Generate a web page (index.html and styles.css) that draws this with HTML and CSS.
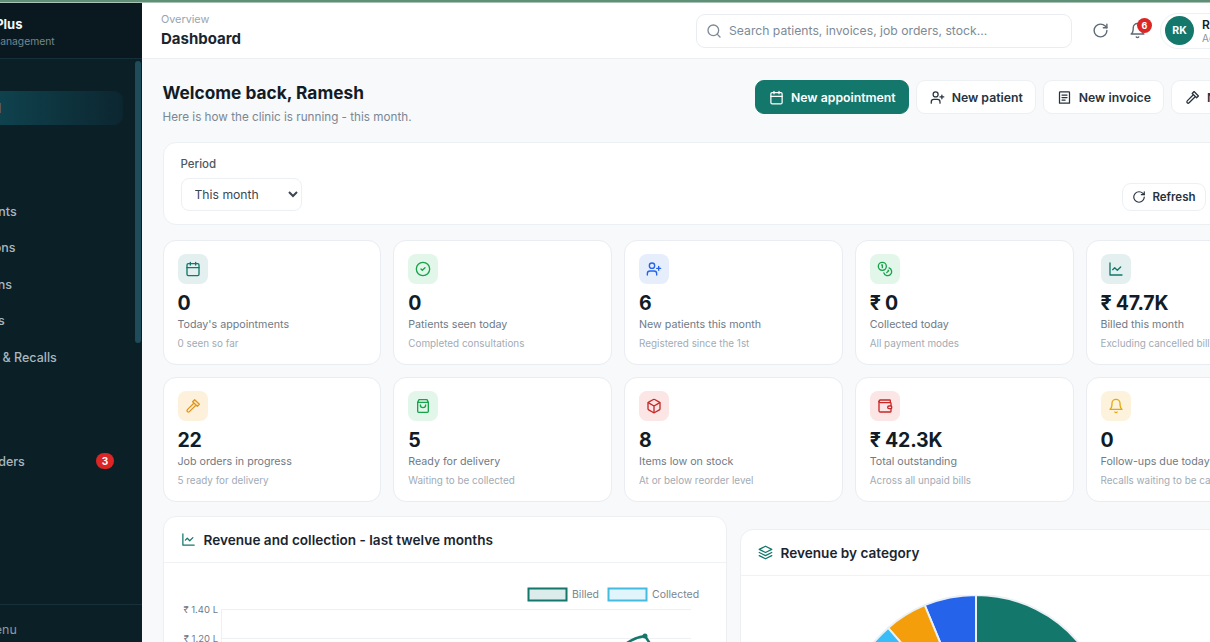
FILE: index.html
```html
<!DOCTYPE html>
<html lang="en">
<head>
  <meta charset="UTF-8" />
  <meta name="viewport" content="width=device-width, initial-scale=1.0"/>
  <title>Dashboard - OpticPlus</title>
  <link rel="stylesheet" href="styles.css">
</head>
<body>
  <svg class="icon-defs" aria-hidden="true">
    <symbol id="i-calendar" viewBox="0 0 24 24"><rect x="3" y="4" width="18" height="18" rx="2"/><path d="M16 2v4M8 2v4M3 10h18"/></symbol>
    <symbol id="i-user-plus" viewBox="0 0 24 24"><path d="M16 21v-2a4 4 0 0 0-4-4H6a4 4 0 0 0-4 4v2"/><circle cx="9" cy="7" r="4"/><path d="M19 8v6M22 11h-6"/></symbol>
    <symbol id="i-invoice" viewBox="0 0 24 24"><path d="M5 3h14a1 1 0 0 1 1 1v17H4V4a1 1 0 0 1 1-1z"/><path d="M8 8h8M8 12h8M8 16h5"/></symbol>
    <symbol id="i-hammer" viewBox="0 0 24 24"><path d="M14.5 2.5l7 7-3 3-7-7z"/><path d="M12.5 8.5L3.6 17.4a2.1 2.1 0 0 0 3 3l8.9-8.9"/></symbol>
    <symbol id="i-check" viewBox="0 0 24 24"><circle cx="12" cy="12" r="10"/><path d="M9 12l2 2 4-4"/></symbol>
    <symbol id="i-coins" viewBox="0 0 24 24"><circle cx="8" cy="8" r="6"/><path d="M18.09 10.37A6 6 0 1 1 10.34 18M7 6h1v4M16.71 13.88l.7.71-2.82 2.82"/></symbol>
    <symbol id="i-chart" viewBox="0 0 24 24"><path d="M3 3v18h18"/><path d="M19 9l-5 5-4-4-3 3"/></symbol>
    <symbol id="i-bag" viewBox="0 0 24 24"><path d="M6 2.5h12l2 4V20a1.5 1.5 0 0 1-1.5 1.5h-13A1.5 1.5 0 0 1 4 20V6.5z"/><path d="M4 6.5h16M16 10.5a4 4 0 0 1-8 0"/></symbol>
    <symbol id="i-box" viewBox="0 0 24 24"><path d="M21 8a2 2 0 0 0-1-1.73l-7-4a2 2 0 0 0-2 0l-7 4A2 2 0 0 0 3 8v8a2 2 0 0 0 1 1.73l7 4a2 2 0 0 0 2 0l7-4A2 2 0 0 0 21 16z"/><path d="M3.3 7l8.7 5 8.7-5M12 22V12"/></symbol>
    <symbol id="i-wallet" viewBox="0 0 24 24"><path d="M20 7V4a1 1 0 0 0-1-1H5a2 2 0 0 0 0 4h15a1 1 0 0 1 1 1v4h-3a2 2 0 0 0 0 4h3a1 1 0 0 0 1-1v-2a1 1 0 0 0-1-1"/><path d="M3 5v14a2 2 0 0 0 2 2h15a1 1 0 0 0 1-1v-4"/></symbol>
    <symbol id="i-bell" viewBox="0 0 24 24"><path d="M6 8a6 6 0 0 1 12 0c0 7 3 9 3 9H3s3-2 3-9"/><path d="M10.3 21a1.94 1.94 0 0 0 3.4 0"/></symbol>
    <symbol id="i-layers" viewBox="0 0 24 24"><path d="M12 2L2 7l10 5 10-5z"/><path d="M2 17l10 5 10-5M2 12l10 5 10-5"/></symbol>
    <symbol id="i-search" viewBox="0 0 24 24"><circle cx="11" cy="11" r="8"/><path d="M21 21l-4.3-4.3"/></symbol>
    <symbol id="i-rotate" viewBox="0 0 24 24"><path d="M21 12a9 9 0 1 1-9-9c2.52 0 4.93 1 6.74 2.74L21 8"/><path d="M21 3v5h-5"/></symbol>
  </svg>

  <div class="top-strip"></div>

  <div class="app">
    <aside class="sidebar">
      <div class="brand">
        <div class="brand-name">OpticPlus</div>
        <div class="brand-sub">Clinic Management</div>
      </div>
      <nav class="side-nav">
        <a class="nav-item active">Dashboard</a>
        <div class="nav-label">Clinic</div>
        <a class="nav-item">Patients</a>
        <a class="nav-item">Appointments</a>
        <a class="nav-item">Consultations</a>
        <a class="nav-item">Prescriptions</a>
        <a class="nav-item">Lab Reports</a>
        <a class="nav-item">Follow-ups &amp; Recalls</a>
        <div class="nav-label nav-label-low">Optical</div>
        <a class="nav-item">Stock</a>
        <a class="nav-item">Lab Job Orders <span class="nav-badge">3</span></a>
      </nav>
      <div class="side-scroll"></div>
      <div class="side-foot">Collapse menu</div>
    </aside>

    <main class="main">
      <header class="topbar">
        <div class="crumbs">
          <div class="crumb-top">Overview</div>
          <div class="crumb-title">Dashboard</div>
        </div>
        <div class="search-box">
          <svg class="ico ico-16"><use href="#i-search"/></svg>
          <span>Search patients, invoices, job orders, stock...</span>
        </div>
        <button class="icon-btn"><svg class="ico ico-17"><use href="#i-rotate"/></svg></button>
        <button class="icon-btn bell-btn">
          <svg class="ico ico-17"><use href="#i-bell"/></svg>
          <span class="bell-count">6</span>
        </button>
        <div class="user-chip">
          <div class="avatar">RK</div>
          <div class="user-text">
            <div class="user-name">Ramesh Kumar</div>
            <div class="user-role">Administrator</div>
          </div>
        </div>
      </header>

      <div class="content">
        <div class="page-head">
          <div class="page-title">
            <h1>Welcome back, Ramesh</h1>
            <p>Here is how the clinic is running - this month.</p>
          </div>
          <div class="page-actions">
            <button class="btn btn-primary"><svg class="ico ico-15"><use href="#i-calendar"/></svg>New appointment</button>
            <button class="btn"><svg class="ico ico-15"><use href="#i-user-plus"/></svg>New patient</button>
            <button class="btn"><svg class="ico ico-15"><use href="#i-invoice"/></svg>New invoice</button>
            <button class="btn"><svg class="ico ico-15"><use href="#i-hammer"/></svg>New job order</button>
          </div>
        </div>

        <section class="filter-panel">
          <div class="filter-group">
            <label for="period">Period</label>
            <select id="period"><option>This month</option><option>Last month</option></select>
          </div>
          <button class="btn btn-small"><svg class="ico ico-14"><use href="#i-rotate"/></svg>Refresh</button>
        </section>

        <section class="stat-grid">
          <div class="stat-card">
            <div class="stat-icon tint-teal"><svg class="ico ico-16"><use href="#i-calendar"/></svg></div>
            <div class="stat-value">0</div>
            <div class="stat-label">Today's appointments</div>
            <div class="stat-sub">0 seen so far</div>
          </div>
          <div class="stat-card">
            <div class="stat-icon tint-green"><svg class="ico ico-16"><use href="#i-check"/></svg></div>
            <div class="stat-value">0</div>
            <div class="stat-label">Patients seen today</div>
            <div class="stat-sub">Completed consultations</div>
          </div>
          <div class="stat-card">
            <div class="stat-icon tint-blue"><svg class="ico ico-16"><use href="#i-user-plus"/></svg></div>
            <div class="stat-value">6</div>
            <div class="stat-label">New patients this month</div>
            <div class="stat-sub">Registered since the 1st</div>
          </div>
          <div class="stat-card">
            <div class="stat-icon tint-green"><svg class="ico ico-16"><use href="#i-coins"/></svg></div>
            <div class="stat-value">₹ 0</div>
            <div class="stat-label">Collected today</div>
            <div class="stat-sub">All payment modes</div>
          </div>
          <div class="stat-card">
            <div class="stat-icon tint-teal"><svg class="ico ico-16"><use href="#i-chart"/></svg></div>
            <div class="stat-value">₹ 47.7K</div>
            <div class="stat-label">Billed this month</div>
            <div class="stat-sub">Excluding cancelled bills</div>
          </div>
          <div class="stat-card">
            <div class="stat-icon tint-amber"><svg class="ico ico-16"><use href="#i-hammer"/></svg></div>
            <div class="stat-value">22</div>
            <div class="stat-label">Job orders in progress</div>
            <div class="stat-sub">5 ready for delivery</div>
          </div>
          <div class="stat-card">
            <div class="stat-icon tint-green"><svg class="ico ico-16"><use href="#i-bag"/></svg></div>
            <div class="stat-value">5</div>
            <div class="stat-label">Ready for delivery</div>
            <div class="stat-sub">Waiting to be collected</div>
          </div>
          <div class="stat-card">
            <div class="stat-icon tint-red"><svg class="ico ico-16"><use href="#i-box"/></svg></div>
            <div class="stat-value">8</div>
            <div class="stat-label">Items low on stock</div>
            <div class="stat-sub">At or below reorder level</div>
          </div>
          <div class="stat-card">
            <div class="stat-icon tint-red"><svg class="ico ico-16"><use href="#i-wallet"/></svg></div>
            <div class="stat-value">₹ 42.3K</div>
            <div class="stat-label">Total outstanding</div>
            <div class="stat-sub">Across all unpaid bills</div>
          </div>
          <div class="stat-card">
            <div class="stat-icon tint-yellow"><svg class="ico ico-16"><use href="#i-bell"/></svg></div>
            <div class="stat-value">0</div>
            <div class="stat-label">Follow-ups due today</div>
            <div class="stat-sub">Recalls waiting to be called</div>
          </div>
        </section>

        <section class="chart-row">
          <div class="chart-card chart-revenue">
            <div class="chart-head"><svg class="ico ico-15 teal"><use href="#i-chart"/></svg>Revenue and collection - last twelve months</div>
            <svg class="line-chart" width="564" height="110" viewBox="1 0 564 110">
              <rect class="swatch-billed" x="365.5" y="24.5" width="38" height="12"/>
              <text class="legend-text" x="409" y="34">Billed</text>
              <rect class="swatch-collected" x="445.5" y="24.5" width="38" height="12"/>
              <text class="legend-text" x="489" y="34">Collected</text>
              <path class="grid-line" d="M58 45.5h470M58 74.5h470M58 103.5h470M58.5 45v65"/>
              <text class="axis-text" x="55" y="49" text-anchor="end">₹ 1.40 L</text>
              <text class="axis-text" x="55" y="78" text-anchor="end">₹ 1.20 L</text>
              <path class="billed-line" d="M458 84Q468 74 482 72L490 84"/>
              <circle class="billed-dot" cx="482" cy="72" r="2.5"/>
            </svg>
          </div>
          <div class="chart-card chart-category">
            <div class="chart-head"><svg class="ico ico-15 teal"><use href="#i-layers"/></svg>Revenue by category</div>
            <div class="pie-wrap">
              <svg width="268" height="268" viewBox="-134 -134 268 268">
                <path class="pie-slice" fill="#13776b" d="M0 0V-134A134 134 0 1 1 -100 89Z"/>
                <path class="pie-slice" fill="#2563eb" d="M0 0L-51.3 -123.8A134 134 0 0 1 0 -134Z"/>
                <path class="pie-slice" fill="#f59e0b" d="M0 0L-87.9 -101.1A134 134 0 0 1 -51.3 -123.8Z"/>
                <path class="pie-slice" fill="#38bdf8" d="M0 0L-104 -84.5A134 134 0 0 1 -87.9 -101.1Z"/>
                <path class="pie-slice" fill="#7c3aed" d="M0 0L-100 89A134 134 0 0 1 -104 -84.5Z"/>
              </svg>
            </div>
          </div>
        </section>
      </div>
    </main>
  </div>
</body>
</html>
```

FILE: styles.css
```css
* { margin:0; padding:0; box-sizing:border-box; font-family:"Inter","Noto Sans",sans-serif; }
html, body { height:100%; overflow:hidden; }
body { background:#f7f9fb; color:#111c27; }
button { border:none; background:none; cursor:pointer; }
.icon-defs { position:absolute; width:0; height:0; }
.ico { fill:none; stroke:currentColor; stroke-width:2; stroke-linecap:round; stroke-linejoin:round; flex:none; }
.ico-14 { width:14px; height:14px; }
.ico-15 { width:15px; height:15px; }
.ico-16 { width:16px; height:16px; }
.ico-17 { width:17px; height:17px; }
.teal { color:#13776b; }

.top-strip { height:3px; background:#5f8f76; border-bottom:1px solid #a9c3b4; }
.app { display:flex; height:639px; }

/* sidebar, its left part is cut off in the window */
.sidebar {
  width:260px; margin-left:-118px; flex:none;
  background:#0b1f27; position:relative;
  display:flex; flex-direction:column;
}
.brand { height:56px; padding:13px 0 0 79px; background:#09191f; border-bottom:1px solid #15303a; }
.brand-name { color:#f4f7f8; font-size:13px; font-weight:700; line-height:16px; }
.brand-sub { color:#75878f; font-size:10.3px; line-height:14px; margin-top:2px; white-space:nowrap; }
.side-nav { flex:1; padding:32px 19px 0 12px; }
.nav-item {
  height:34px; margin-bottom:2.5px; padding:0 9px 0 39px;
  display:flex; align-items:center; justify-content:space-between;
  color:#a9b7bd; font-size:12.5px; font-weight:500; border-radius:9px;
}
.nav-item.active { padding-left:41px; background:linear-gradient(90deg,#115a66,#0c2630); color:#e6f0f2; font-weight:600; }
.nav-label { height:30px; padding:13px 0 0 39px; color:#5a6d75; font-size:10px; text-transform:uppercase; }
.nav-label-low { height:31px; }
.nav-badge {
  width:18px; height:16px; border-radius:9px; background:#dc2626; color:#fff;
  font-size:10px; font-weight:700; display:flex; align-items:center; justify-content:center;
}
.side-scroll { position:absolute; right:1px; top:58px; width:6px; height:282px; border-radius:3px; background:#1f4c5a; }
.side-foot { height:38px; padding:17px 0 0 47px; border-top:1px solid #18303a; color:#8b9ba2; font-size:12.5px; line-height:16px; }

/* top bar */
.main { flex:1; min-width:0; overflow:hidden; }
.topbar { height:56px; background:#fff; border-bottom:1px solid #edf0f3; padding-left:19px; display:flex; align-items:center; }
.crumbs { width:535px; flex:none; }
.crumb-top { color:#9aa4ae; font-size:10.8px; line-height:14px; }
.crumb-title { color:#1a2530; font-size:15px; font-weight:700; line-height:20px; margin-top:2px; }
.search-box {
  width:376px; height:34px; flex:none; padding:0 9px;
  background:#fff; border:1px solid #e9edf1; border-radius:9px;
  display:flex; align-items:center; gap:7px; color:#7e8a95; font-size:12.2px; white-space:nowrap;
}
.icon-btn { width:36px; height:36px; flex:none; color:#5e6a76; display:flex; align-items:center; justify-content:center; position:relative; }
.search-box + .icon-btn { margin-left:10px; }
.bell-btn { margin-left:1px; }
.bell-count {
  position:absolute; right:3px; top:5px; width:15px; height:15px; border-radius:50%;
  background:#dc2626; color:#fff; font-size:9px; font-weight:700;
  display:flex; align-items:center; justify-content:center;
}
.user-chip { flex:none; margin-left:5px; height:36px; padding:0 4px; border:1px solid #edf0f3; border-radius:18px; display:flex; align-items:center; gap:8px; }
.avatar { width:29px; height:29px; border-radius:50%; background:#13776b; color:#fff; font-size:10.5px; font-weight:700; display:flex; align-items:center; justify-content:center; }
.user-name { font-size:12px; font-weight:600; line-height:15px; white-space:nowrap; }
.user-role { font-size:10px; color:#8b95a0; line-height:13px; white-space:nowrap; }

/* page */
.content { padding:21px 0 0 20.5px; }
.page-head { display:flex; height:34px; }
.page-title { width:592.5px; flex:none; }
.page-title h1 { font-size:17.3px; font-weight:700; line-height:26px; color:#111c27; }
.page-title p { font-size:11.7px; line-height:16px; color:#7c8793; margin-top:3px; }
.page-actions { display:flex; gap:7px; flex:none; }
.btn {
  height:34px; padding:0 12px 0 13px; flex:none;
  background:#fff; border:1px solid #edf0f3; border-radius:9px;
  display:flex; align-items:center; gap:7px;
  color:#27323d; font-size:12.25px; font-weight:600; white-space:nowrap;
}
.btn-primary { background:#13776b; border-color:#13776b; color:#fff; }
.btn-small { height:28px; padding:0 9px; font-size:11.5px; gap:6px; }

.filter-panel {
  width:1062px; height:83px; margin-top:28px; padding:14px 18px 13px 17px;
  background:#fff; border:1px solid #edf0f3; border-radius:13px;
  display:flex; align-items:flex-end; justify-content:space-between;
}
.filter-group label { display:block; font-size:11.5px; font-weight:500; color:#4c5763; line-height:14px; margin:0 0 7px; }
.filter-group select {
  width:121px; height:33px; padding:0 9px;
  background:#fff; border:1px solid #edf0f3; border-radius:8px;
  color:#3b4652; font-size:12.2px;
}

.stat-grid { display:grid; grid-template-columns:repeat(5,218.75px); gap:12.5px 12px; margin-top:15px; }
.stat-card { height:124.5px; padding:13px 14px; background:#fff; border:1px solid #e9edf1; border-radius:13px; }
.stat-icon { width:30px; height:30px; border-radius:8px; display:flex; align-items:center; justify-content:center; }
.tint-teal { background:#e3f0ef; color:#13776b; }
.tint-green { background:#e3f6ea; color:#16a34a; }
.tint-blue { background:#e6eefc; color:#2563eb; }
.tint-amber { background:#fdf1dc; color:#e0951a; }
.tint-red { background:#fbe5e5; color:#c62828; }
.tint-yellow { background:#fdf3dc; color:#e2a911; }
.stat-value { font-size:19.5px; letter-spacing:-0.2px; font-weight:700; line-height:26px; margin-top:6px; color:#111c27; }
.stat-label { font-size:10.7px; line-height:14px; margin-top:2px; color:#6f7a86; }
.stat-sub { font-size:9.9px; line-height:13px; margin-top:5px; color:#a2abb5; }

.chart-row { display:flex; align-items:flex-start; gap:13px; margin-top:14.5px; }
.chart-card { flex:none; background:#fff; border:1px solid #edf0f3; border-radius:13px 13px 0 0; }
.chart-revenue { width:564px; }
.chart-category { width:500px; margin-top:13px; }
.chart-head {
  height:46px; padding-left:17px; border-bottom:1px solid #f0f2f5;
  display:flex; align-items:center; gap:8px;
  font-size:13.6px; font-weight:600; color:#1a2530;
}
.line-chart { display:block; margin-top:1px; }
.swatch-billed { fill:#dcecea; stroke:#13776b; stroke-width:2; }
.swatch-collected { fill:#e0f5fc; stroke:#46bbe0; stroke-width:2; }
.legend-text { font-size:10.5px; fill:#7b858f; }
.axis-text { font-size:9.5px; fill:#6f7a86; }
.grid-line { stroke:#eef0f3; fill:none; }
.billed-line { stroke:#13776b; stroke-width:2.5; fill:none; }
.billed-dot { fill:#13776b; }
.pie-wrap { padding:19px 0 0 101px; }
.pie-wrap svg { display:block; }
.pie-slice { stroke:#eaf1f5; stroke-width:2; }
```
